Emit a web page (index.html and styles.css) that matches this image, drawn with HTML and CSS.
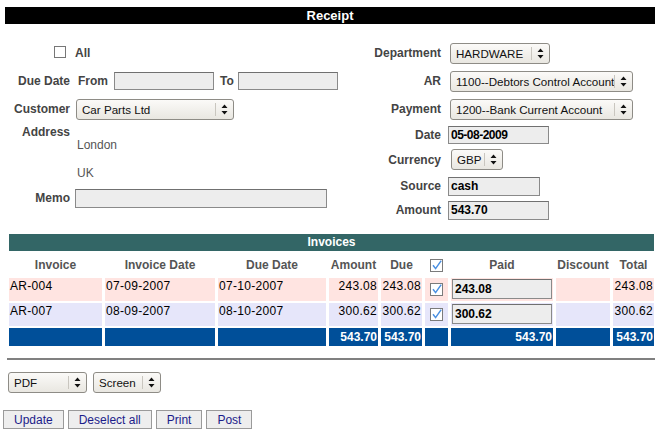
FILE: index.html
```html
<!DOCTYPE html>
<html>
<head>
<meta charset="utf-8">
<title>Receipt</title>
<link rel="stylesheet" href="styles.css">
</head>
<body>
<div class="title">Receipt</div>

<div class="top">
  <div class="col-left">
    <span class="lbl"><span class="cb"></span></span>
    <span class="val b">All</span>

    <span class="lbl">Due Date</span>
    <span class="val due">
      <span class="b from">From</span><input class="inp w-due" type="text"><span class="b to">To</span><input class="inp w-due" type="text">
    </span>

    <span class="lbl">Customer</span>
    <span class="val"><span class="sel w-cust"><span class="sel-text">Car Parts Ltd</span><span class="sel-btn"><svg width="7" height="11" viewBox="0 0 7 11"><path d="M3.5 0.5L6.5 4H0.5Z M0.5 7H6.5L3.5 10.5Z"/></svg></span></span></span>

    <span class="lbl lbl-top">Address</span>
    <span class="val addr"><br>London<br><br>UK</span>

    <span class="lbl">Memo</span>
    <span class="val"><input class="inp w-memo" type="text"></span>
  </div>

  <div class="col-right">
    <span class="lbl">Department</span>
    <span class="val"><span class="sel w-dept"><span class="sel-text">HARDWARE</span><span class="sel-btn"><svg width="7" height="11" viewBox="0 0 7 11"><path d="M3.5 0.5L6.5 4H0.5Z M0.5 7H6.5L3.5 10.5Z"/></svg></span></span></span>

    <span class="lbl">AR</span>
    <span class="val"><span class="sel w-acc"><span class="sel-text">1100--Debtors Control Account</span><span class="sel-btn"><svg width="7" height="11" viewBox="0 0 7 11"><path d="M3.5 0.5L6.5 4H0.5Z M0.5 7H6.5L3.5 10.5Z"/></svg></span></span></span>

    <span class="lbl">Payment</span>
    <span class="val"><span class="sel w-acc"><span class="sel-text">1200--Bank Current Account</span><span class="sel-btn"><svg width="7" height="11" viewBox="0 0 7 11"><path d="M3.5 0.5L6.5 4H0.5Z M0.5 7H6.5L3.5 10.5Z"/></svg></span></span></span>

    <span class="lbl">Date</span>
    <span class="val"><input class="inp w-date date" type="text" value="05-08-2009"></span>

    <span class="lbl">Currency</span>
    <span class="val"><span class="sel w-cur"><span class="sel-text">GBP</span><span class="sel-btn"><svg width="7" height="11" viewBox="0 0 7 11"><path d="M3.5 0.5L6.5 4H0.5Z M0.5 7H6.5L3.5 10.5Z"/></svg></span></span></span>

    <span class="lbl">Source</span>
    <span class="val"><input class="inp w-src tall" type="text" value="cash"></span>

    <span class="lbl">Amount</span>
    <span class="val"><input class="inp w-date tall" type="text" value="543.70"></span>
  </div>
</div>

<table class="inv">
  <colgroup>
    <col class="c-inv"><col class="c-idate"><col class="c-ddate"><col class="c-amt"><col class="c-due"><col class="c-chk"><col class="c-paid"><col class="c-disc"><col class="c-tot">
  </colgroup>
  <tr><th colspan="9" class="listtop">Invoices</th></tr>
  <tr class="head">
    <th>Invoice</th><th>Invoice Date</th><th>Due Date</th><th>Amount</th><th>Due</th>
    <th class="chk"><span class="cbx"><svg width="13" height="13" viewBox="0 0 13 13"><rect x="0.5" y="0.5" width="12" height="12" fill="#fff" stroke="#7b7b7b"/><path d="M3 6.2L5.6 9.6L11.2 1.6" fill="none" stroke="#4a90e2" stroke-width="1.5"/></svg></span></th>
    <th>Paid</th><th>Discount</th><th>Total</th>
  </tr>
  <tr class="r0">
    <td>AR-004</td><td>07-09-2007</td><td>07-10-2007</td><td class="num">243.08</td><td class="num">243.08</td>
    <td class="chk"><span class="cbx"><svg width="13" height="13" viewBox="0 0 13 13"><rect x="0.5" y="0.5" width="12" height="12" fill="#fff" stroke="#7b7b7b"/><path d="M3 6.2L5.6 9.6L11.2 1.6" fill="none" stroke="#4a90e2" stroke-width="1.5"/></svg></span></td>
    <td><input class="inp paid" type="text" value="243.08"></td><td></td><td class="num">243.08</td>
  </tr>
  <tr class="r1">
    <td>AR-007</td><td>08-09-2007</td><td>08-10-2007</td><td class="num">300.62</td><td class="num">300.62</td>
    <td class="chk"><span class="cbx"><svg width="13" height="13" viewBox="0 0 13 13"><rect x="0.5" y="0.5" width="12" height="12" fill="#fff" stroke="#7b7b7b"/><path d="M3 6.2L5.6 9.6L11.2 1.6" fill="none" stroke="#4a90e2" stroke-width="1.5"/></svg></span></td>
    <td><input class="inp paid" type="text" value="300.62"></td><td></td><td class="num">300.62</td>
  </tr>
  <tr class="total">
    <td></td><td></td><td></td><td class="num">543.70</td><td class="num">543.70</td><td></td><td class="num">543.70</td><td></td><td class="num">543.70</td>
  </tr>
</table>

<hr class="sep">

<div class="output">
  <span class="sel w-pdf"><span class="sel-text">PDF</span><span class="sel-btn"><svg width="7" height="11" viewBox="0 0 7 11"><path d="M3.5 0.5L6.5 4H0.5Z M0.5 7H6.5L3.5 10.5Z"/></svg></span></span>
  <span class="sel w-screen"><span class="sel-text">Screen</span><span class="sel-btn"><svg width="7" height="11" viewBox="0 0 7 11"><path d="M3.5 0.5L6.5 4H0.5Z M0.5 7H6.5L3.5 10.5Z"/></svg></span></span>
</div>

<div class="buttons">
  <button class="btn">Update</button>
  <button class="btn">Deselect all</button>
  <button class="btn">Print</button>
  <button class="btn">Post</button>
</div>
</body>
</html>
```
FILE: styles.css
```css
* { box-sizing: border-box; }

body {
  margin: 0;
  font-family: "Liberation Sans", Arial, sans-serif;
  font-size: 12px;
  color: #000;
  background: #fff;
}

.title {
  margin: 7px 6px 0 5px;
  height: 17px;
  line-height: 17px;
  background: #000;
  color: #fff;
  font-weight: bold;
  font-size: 13px;
  text-align: center;
}

.top {
  display: flex;
  margin-top: 15px;
}

.col-left {
  width: 345px;
  display: grid;
  grid-template-columns: 70px 1fr;
  column-gap: 5px;
  grid-template-rows: 28px 28px 28px 58px 34px;
  align-items: center;
}

.col-right {
  display: grid;
  grid-template-columns: 96px auto;
  column-gap: 7px;
  grid-template-rows: 28px 28px 28px 23px 27px 26px 22px;
  align-items: center;
}

.lbl {
  justify-self: end;
  font-weight: bold;
  color: #444;
  white-space: nowrap;
}

.lbl-top {
  align-self: start;
  padding-top: 2px;
  line-height: 14px;
}

.val {
  display: flex;
  align-items: center;
  white-space: nowrap;
}

.b { font-weight: bold; color: #444; }

.from { margin-left: 3px; margin-right: 6px; }
.to { margin-left: 6px; margin-right: 4px; }

.addr {
  display: block;
  align-self: start;
  line-height: 14px;
  padding-top: 1px;
  padding-left: 2px;
  color: #555;
}

.cb {
  display: inline-block;
  width: 12px;
  height: 12px;
  border: 1px solid #777;
  background: #fff;
  margin-right: 4px;
}

.inp {
  height: 18px;
  border: 1px solid #8a8a8a;
  border-top-color: #707070;
  background: #ededed;
  padding: 0 2px;
  font-family: "Liberation Sans", Arial, sans-serif;
  font-size: 12px;
  font-weight: bold;
  color: #000;
  margin: 0;
  outline: none;
}

.tall { height: 19px; }
.w-due { width: 100px; }
.w-memo { width: 252px; height: 19px; }
.w-date { width: 101px; }
.w-src { width: 92px; }
.date { letter-spacing: -0.5px; }

.sel {
  display: inline-flex;
  align-items: stretch;
  height: 21px;
  border: 1px solid #8e8c86;
  border-radius: 3px;
  background: linear-gradient(#fbfaf8, #e9e7e1);
  font-size: 11.6px;
  color: #111;
}

.sel-text {
  flex: 1;
  display: flex;
  align-items: center;
  padding-left: 5px;
  white-space: nowrap;
}

.sel-btn {
  flex: none;
  width: 18px;
  display: flex;
  align-items: center;
  justify-content: center;
  position: relative;
}

.sel-btn::before {
  content: "";
  position: absolute;
  left: 0;
  top: 3px;
  bottom: 3px;
  border-left: 1px solid #c9c6bf;
}

.sel-btn svg { fill: #111; }

.w-cust { width: 158px; margin-left: 1px; }
.w-dept { width: 100px; margin-left: 2px; }
.w-acc { width: 183px; margin-left: 2px; }
.w-cur { width: 52px; margin-left: 3px; }
.w-pdf { width: 79px; }
.w-screen { width: 68px; }

/* invoices table */
.inv {
  margin: 11px 0 0 6px;
  width: 651px;
  table-layout: fixed;
  border-spacing: 3px 2px;
}

.c-inv { width: 93px; }
.c-idate { width: 110px; }
.c-ddate { width: 108px; }
.c-amt { width: 49px; }
.c-due { width: 41px; }
.c-chk { width: 23px; }
.c-paid { width: 102px; }
.c-disc { width: 54px; }
.c-tot { width: 41px; }

.inv th, .inv td {
  padding: 1px;
  white-space: nowrap;
  overflow: hidden;
}

.listtop {
  height: 17px;
  padding: 0;
  background: #336666;
  color: #fff;
  font-weight: bold;
  font-size: 12px;
  text-align: center;
  line-height: 15px;
}

.head th {
  height: 23px;
  font-weight: bold;
  color: #555;
  text-align: center;
  vertical-align: middle;
}

.r0 td, .r1 td {
  height: 23px;
  vertical-align: top;
  font-size: 12px;
  line-height: 15px;
  letter-spacing: 0.3px;
}

.r0 td { background: #ffe4e1; }
.r1 td { background: #e6e6fa; }

.inv .chk { text-align: center; vertical-align: middle; }

.cbx {
  display: inline-flex;
  width: 13px;
  height: 13px;
  vertical-align: middle;
}

.num { text-align: right; }

.paid {
  width: 100px;
  height: 20px;
  letter-spacing: 0;
}

.total td {
  height: 18px;
  background: #004f99;
  color: #fff;
  font-weight: bold;
  vertical-align: middle;
}

.sep {
  border: 0;
  height: 2px;
  background: #808080;
  margin: 10px 6px 0 7px;
}

.output {
  display: flex;
  gap: 6px;
  margin-top: 12px;
  padding-left: 8px;
}

.buttons {
  display: flex;
  gap: 4px;
  margin-top: 17px;
  padding-left: 3px;
}

.btn {
  height: 19px;
  padding: 0 10px;
  border: 1px solid #9a9a9a;
  background: #eeeeee;
  color: #1c1c8a;
  font-family: "Liberation Sans", Arial, sans-serif;
  font-size: 12px;
  margin: 0;
}
```
